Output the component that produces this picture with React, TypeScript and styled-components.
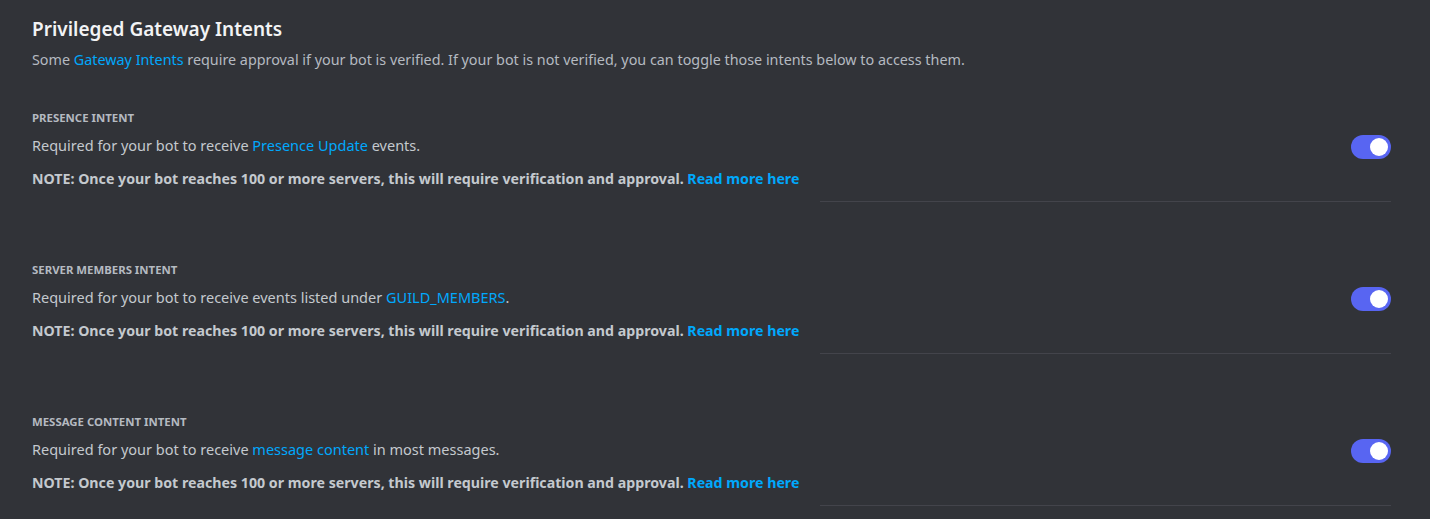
import React from "react";
import styled, { createGlobalStyle } from "styled-components";

const Global = createGlobalStyle`
  html, body { margin: 0; padding: 0; background: #313338; }
  body { font-family: "Noto Sans", "Open Sans", sans-serif; -webkit-font-smoothing: antialiased; }
`;

const Page = styled.div`
  background: #313338;
  min-height: 519px;
  padding: 16px 39px 0 32px;
  box-sizing: border-box;
`;

const Title = styled.h2`
  margin: 0;
  font-size: 19px;
  line-height: 26px;
  font-weight: 600;
  color: #f2f3f5;
`;

const Subtitle = styled.p`
  margin: 8px 0 0;
  font-size: 14.35px;
  line-height: 20px;
  color: #b5bac1;
`;

const Link = styled.a<{ $bold?: boolean }>`
  color: #00a8fc;
  text-decoration: none;
  font-weight: ${(p) => (p.$bold ? 700 : 400)};
`;

const Section = styled.section<{ $first?: boolean }>`
  margin-top: ${(p) => (p.$first ? "40px" : "60px")};
`;

const Label = styled.h3`
  margin: 0;
  font-size: 11.4px;
  line-height: 16px;
  font-weight: 700;
  color: #b5bac1;
  text-transform: uppercase;
`;

const Row = styled.div`
  display: flex;
  align-items: flex-start;
  justify-content: space-between;
  margin-top: 9px;
`;

const Texts = styled.div`
  display: flex;
  flex-direction: column;
  gap: 14px;
`;

const Desc = styled.div`
  font-size: 14.5px;
  line-height: 20px;
  color: #c4c9ce;
`;

const Note = styled.div`
  font-size: 14.2px;
  line-height: 20px;
  font-weight: 700;
  color: #c4c9ce;
`;

const Toggle = styled.div<{ $on: boolean }>`
  position: relative;
  width: 40px;
  height: 24px;
  border-radius: 12px;
  background: ${(p) => (p.$on ? "#5865f2" : "#80848e")};
  flex-shrink: 0;
`;

const Knob = styled.span<{ $on: boolean }>`
  position: absolute;
  top: 3px;
  left: ${(p) => (p.$on ? "19px" : "3px")};
  width: 18px;
  height: 18px;
  border-radius: 50%;
  background: #ffffff;
`;

const Divider = styled.div`
  margin: 12px 0 0 auto;
  width: 571px;
  height: 1px;
  background: #43444b;
`;

const intents = [
  {
    label: "Presence Intent",
    pre: "Required for your bot to receive ",
    link: "Presence Update",
    post: " events.",
  },
  {
    label: "Server Members Intent",
    pre: "Required for your bot to receive events listed under ",
    link: "GUILD_MEMBERS",
    post: ".",
  },
  {
    label: "Message Content Intent",
    pre: "Required for your bot to receive ",
    link: "message content",
    post: " in most messages.",
  },
];

export default function App() {
  return (
    <>
      <Global />
      <Page>
        <Title>Privileged Gateway Intents</Title>
        <Subtitle>
          Some <Link>Gateway Intents</Link> require approval if your bot is verified. If your bot is not
          verified, you can toggle those intents below to access them.
        </Subtitle>
        {intents.map((it, i) => (
          <Section key={it.label} $first={i === 0}>
            <Label>{it.label}</Label>
            <Row>
              <Texts>
                <Desc>
                  {it.pre}
                  <Link>{it.link}</Link>
                  {it.post}
                </Desc>
                <Note>
                  NOTE: Once your bot reaches 100 or more servers, this will require verification and
                  approval. <Link $bold>Read more here</Link>
                </Note>
              </Texts>
              <Toggle $on>
                <Knob $on />
              </Toggle>
            </Row>
            <Divider />
          </Section>
        ))}
      </Page>
    </>
  );
}
